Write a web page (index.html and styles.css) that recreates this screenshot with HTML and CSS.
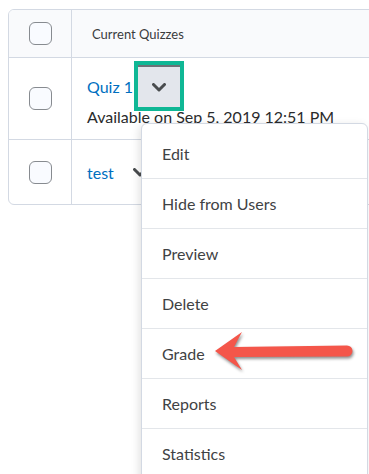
FILE: index.html
```html
<!DOCTYPE html>
<html>
<head>
<meta charset="utf-8">
<link rel="stylesheet" href="styles.css">
</head>
<body>
<div class="page">
  <div class="table">
    <div class="cell check-cell head"><span class="checkbox"></span></div>
    <div class="cell title-cell head"><span class="head-text">Current Quizzes</span></div>

    <div class="cell check-cell row1"><span class="checkbox"></span></div>
    <div class="cell title-cell row1">
      <div class="quiz-line">
        <a class="link">Quiz 1</a>
        <span class="drop-btn active">
          <svg width="14" height="9" viewBox="0 0 14 9"><path d="M1.5 1.5 L7 7 L12.5 1.5" fill="none" stroke="#494c4e" stroke-width="3" stroke-linecap="round" stroke-linejoin="round"/></svg>
        </span>
      </div>
      <div class="avail">Available on Sep 5, 2019 12:51 PM</div>
    </div>

    <div class="cell check-cell row2 last"><span class="checkbox"></span></div>
    <div class="cell title-cell row2 last">
      <div class="quiz-line">
        <a class="link">test</a>
        <span class="drop-btn">
          <svg width="14" height="9" viewBox="0 0 14 9"><path d="M1.5 1.5 L7 7 L12.5 1.5" fill="none" stroke="#494c4e" stroke-width="3" stroke-linecap="round" stroke-linejoin="round"/></svg>
        </span>
      </div>
    </div>
  </div>

  <div class="menu">
    <div class="item">Edit</div>
    <div class="item">Hide from Users</div>
    <div class="item">Preview</div>
    <div class="item">Delete</div>
    <div class="item">Grade</div>
    <div class="item">Reports</div>
    <div class="item">Statistics</div>
  </div>

  <svg class="arrow" width="150" height="50" viewBox="0 0 150 50">
    <path d="M5 21 L32 2 L24 17 L137 15.5 A5 5 0 0 1 137 26.5 L24 27 L32 40 Z" fill="#f4564a"/>
  </svg>
</div>
</body>
</html>
```
FILE: styles.css
```css
html, body {
  margin: 0;
  padding: 0;
  background: #fff;
  overflow: hidden;
}
body {
  width: 369px;
  height: 474px;
  font-family: Lato, "Open Sans", sans-serif;
  color: #494c4e;
}
.page {
  position: relative;
  width: 369px;
  height: 474px;
  padding-top: 9px;
  box-sizing: border-box;
}
.table {
  margin-left: 8px;
  width: 400px;
  border: 1px solid #d3d9e3;
  border-radius: 6px;
  display: grid;
  grid-template-columns: 63px 1fr;
  grid-template-rows: 48px 82px 64px;
  overflow: hidden;
}
.cell {
  border-bottom: 1px solid #d3d9e3;
  box-sizing: content-box;
}
.cell.last { border-bottom: none; }
.head { background: #f9fafc; }
.check-cell {
  display: flex;
  align-items: center;
  justify-content: center;
  border-right: 1px solid #d3d9e3;
}
.checkbox {
  width: 21px;
  height: 21px;
  border: 1px solid #878b90;
  border-radius: 6px;
  background: #f9fbff;
  margin-left: 1px;
}
.title-cell.head {
  display: flex;
  align-items: center;
  padding-left: 20px;
}
.head-text {
  font-size: 13px;
  color: #3a3c3e;
}
.title-cell.row1 {
  padding-left: 15px;
  padding-top: 7px;
}
.title-cell.row2 {
  padding-left: 15px;
  display: flex;
  align-items: center;
}
.quiz-line {
  display: flex;
  align-items: center;
  gap: 5px;
  height: 42px;
}
.link {
  color: #006fbf;
  font-size: 16px;
}
.drop-btn {
  width: 42px;
  height: 42px;
  display: flex;
  align-items: center;
  justify-content: center;
  box-sizing: border-box;
}
.drop-btn svg { display: block; margin-top: 1px; }
.drop-btn.active {
  background: #e3e6ec;
  border-top: 2px solid #6d7176;
  outline: 4px solid #0fb795;
}
.avail {
  font-size: 16px;
  line-height: 20px;
  color: #2a2b2c;
}
.menu {
  position: absolute;
  left: 141px;
  top: 123px;
  width: 227px;
  height: 400px;
  box-sizing: border-box;
  border: 1px solid #d3d9e3;
  border-radius: 6px;
  background: #fff;
  padding-top: 4px;
  box-shadow: -2px 2px 8px rgba(0,0,0,0.12);
}
.item {
  height: 49px;
  border-bottom: 1px solid #e3e6ea;
  display: flex;
  align-items: center;
  padding-left: 20px;
  font-size: 16px;
  color: #3f4244;
}
.item:first-child { height: 50px; }
.arrow {
  position: absolute;
  left: 210px;
  top: 330px;
  filter: drop-shadow(1px 2px 1.5px rgba(0,0,0,0.45));
}
```
